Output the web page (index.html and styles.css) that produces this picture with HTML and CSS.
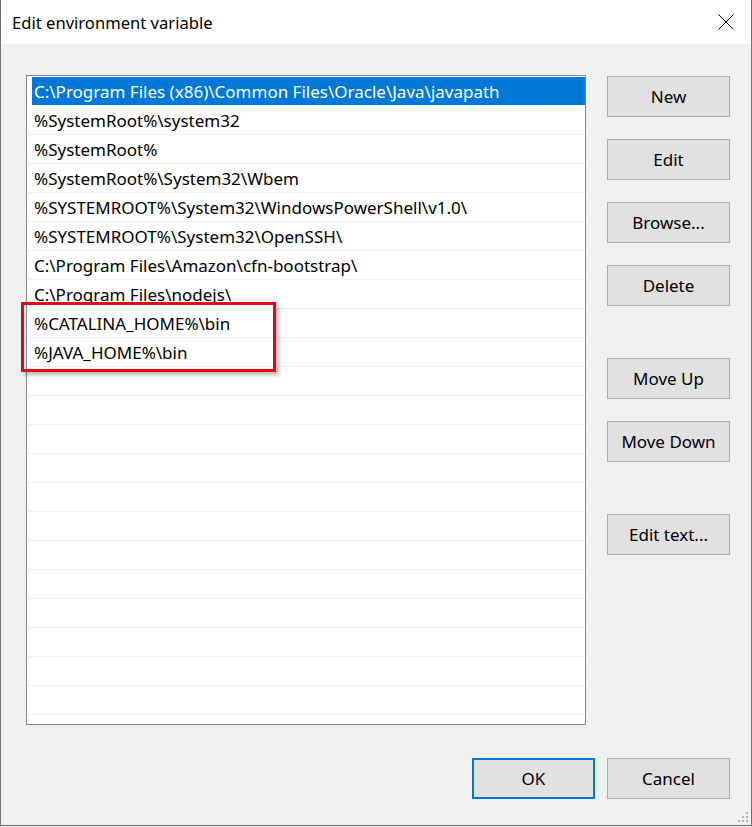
FILE: index.html
```html
<!DOCTYPE html>
<html>
<head>
<meta charset="utf-8">
<link rel="stylesheet" href="styles.css">
</head>
<body>
<div class="window">
  <div class="titlebar">
    <span class="title">Edit environment variable</span>
    <svg class="close" width="16" height="16" viewBox="0 0 16 16"><path d="M0.5 0.5L15.5 15.5M15.5 0.5L0.5 15.5" stroke="#000" stroke-width="1" fill="none"/></svg>
  </div>
  <div class="content">
    <div class="list">
      <div class="row selected">C:\Program Files (x86)\Common Files\Oracle\Java\javapath</div>
      <div class="row">%SystemRoot%\system32</div>
      <div class="row">%SystemRoot%</div>
      <div class="row">%SystemRoot%\System32\Wbem</div>
      <div class="row">%SYSTEMROOT%\System32\WindowsPowerShell\v1.0\</div>
      <div class="row">%SYSTEMROOT%\System32\OpenSSH\</div>
      <div class="row">C:\Program Files\Amazon\cfn-bootstrap\</div>
      <div class="row">C:\Program Files\nodejs\</div>
      <div class="row">%CATALINA_HOME%\bin</div>
      <div class="row">%JAVA_HOME%\bin</div>
      <div class="row"></div>
      <div class="row"></div>
      <div class="row"></div>
      <div class="row"></div>
      <div class="row"></div>
      <div class="row"></div>
      <div class="row"></div>
      <div class="row"></div>
      <div class="row"></div>
      <div class="row"></div>
      <div class="row"></div>
      <div class="row"></div>
      <div class="row last"></div>
      <div class="highlight"></div>
    </div>
    <div class="side">
      <div class="btn">New</div>
      <div class="btn">Edit</div>
      <div class="btn">Browse...</div>
      <div class="btn">Delete</div>
      <div class="btn spaced">Move Up</div>
      <div class="btn">Move Down</div>
      <div class="btn spaced">Edit text...</div>
    </div>
  </div>
  <div class="footer">
    <div class="btn default">OK</div>
    <div class="btn">Cancel</div>
  </div>
  <svg class="grip" width="12" height="12" viewBox="0 0 12 12">
    <rect x="9" y="1" width="2" height="2" fill="#b4b4b4"/>
    <rect x="5" y="5" width="2" height="2" fill="#b4b4b4"/>
    <rect x="9" y="5" width="2" height="2" fill="#b4b4b4"/>
    <rect x="1" y="9" width="2" height="2" fill="#b4b4b4"/>
    <rect x="5" y="9" width="2" height="2" fill="#b4b4b4"/>
    <rect x="9" y="9" width="2" height="2" fill="#b4b4b4"/>
  </svg>
</div>
</body>
</html>
```
FILE: styles.css
```css
html, body {
  margin: 0;
  padding: 0;
  background: #f0f0f0;
}
body {
  font-family: "Noto Sans", "Open Sans", sans-serif;
  font-size: 17px;
  color: #000;
}
.window {
  position: relative;
  width: 752px;
  height: 826px;
  box-sizing: border-box;
  border-left: 1px solid #6f6f6f;
  border-right: 1px solid #6f6f6f;
  border-bottom: 1px solid #6f6f6f;
  background: #f0f0f0;
  display: flex;
  flex-direction: column;
}
.titlebar {
  height: 44px;
  background: #fff;
  display: flex;
  align-items: center;
  justify-content: space-between;
  padding: 0 17px 0 11px;
  flex-shrink: 0;
}
.title {
  font-size: 16.6px;
  margin-top: 1px;
}
.close {
  display: block;
}
.content {
  display: flex;
  padding: 31px 0 0 25px;
}
.list {
  position: relative;
  width: 560px;
  height: 650px;
  box-sizing: border-box;
  border: 1px solid #828790;
  background: #fff;
  padding: 1px 0 0 1px;
}
.row {
  height: 28px;
  border-bottom: 1px solid #f0f0f0;
  line-height: 29px;
  padding-left: 6px;
  white-space: nowrap;
  overflow: hidden;
}
.row.last {
  height: 7px;
  border-bottom: none;
}
.row.selected {
  background: #0078d7;
  color: #fff;
  box-shadow: inset 4px 0 0 #fff;
  border-bottom-color: #fff;
}
.highlight {
  position: absolute;
  left: -6px;
  top: 226px;
  width: 249px;
  height: 64px;
  border: 3px solid #e30613;
  box-shadow: 3px 3px 4px rgba(0, 0, 0, 0.28);
}
.side {
  display: flex;
  flex-direction: column;
  gap: 22px;
  margin-left: 21px;
  margin-top: 1px;
}
.btn {
  width: 123px;
  height: 41px;
  box-sizing: border-box;
  background: #e1e1e1;
  border: 1px solid #adadad;
  display: flex;
  align-items: center;
  justify-content: center;
  font-size: 17px;
}
.btn.spaced {
  margin-top: 30px;
}
.footer {
  display: flex;
  justify-content: flex-end;
  gap: 12px;
  padding: 33px 21px 0 0;
}
.btn.default {
  border: 2px solid #0078d7;
}
.grip {
  position: absolute;
  right: 2px;
  bottom: 2px;
}
```
